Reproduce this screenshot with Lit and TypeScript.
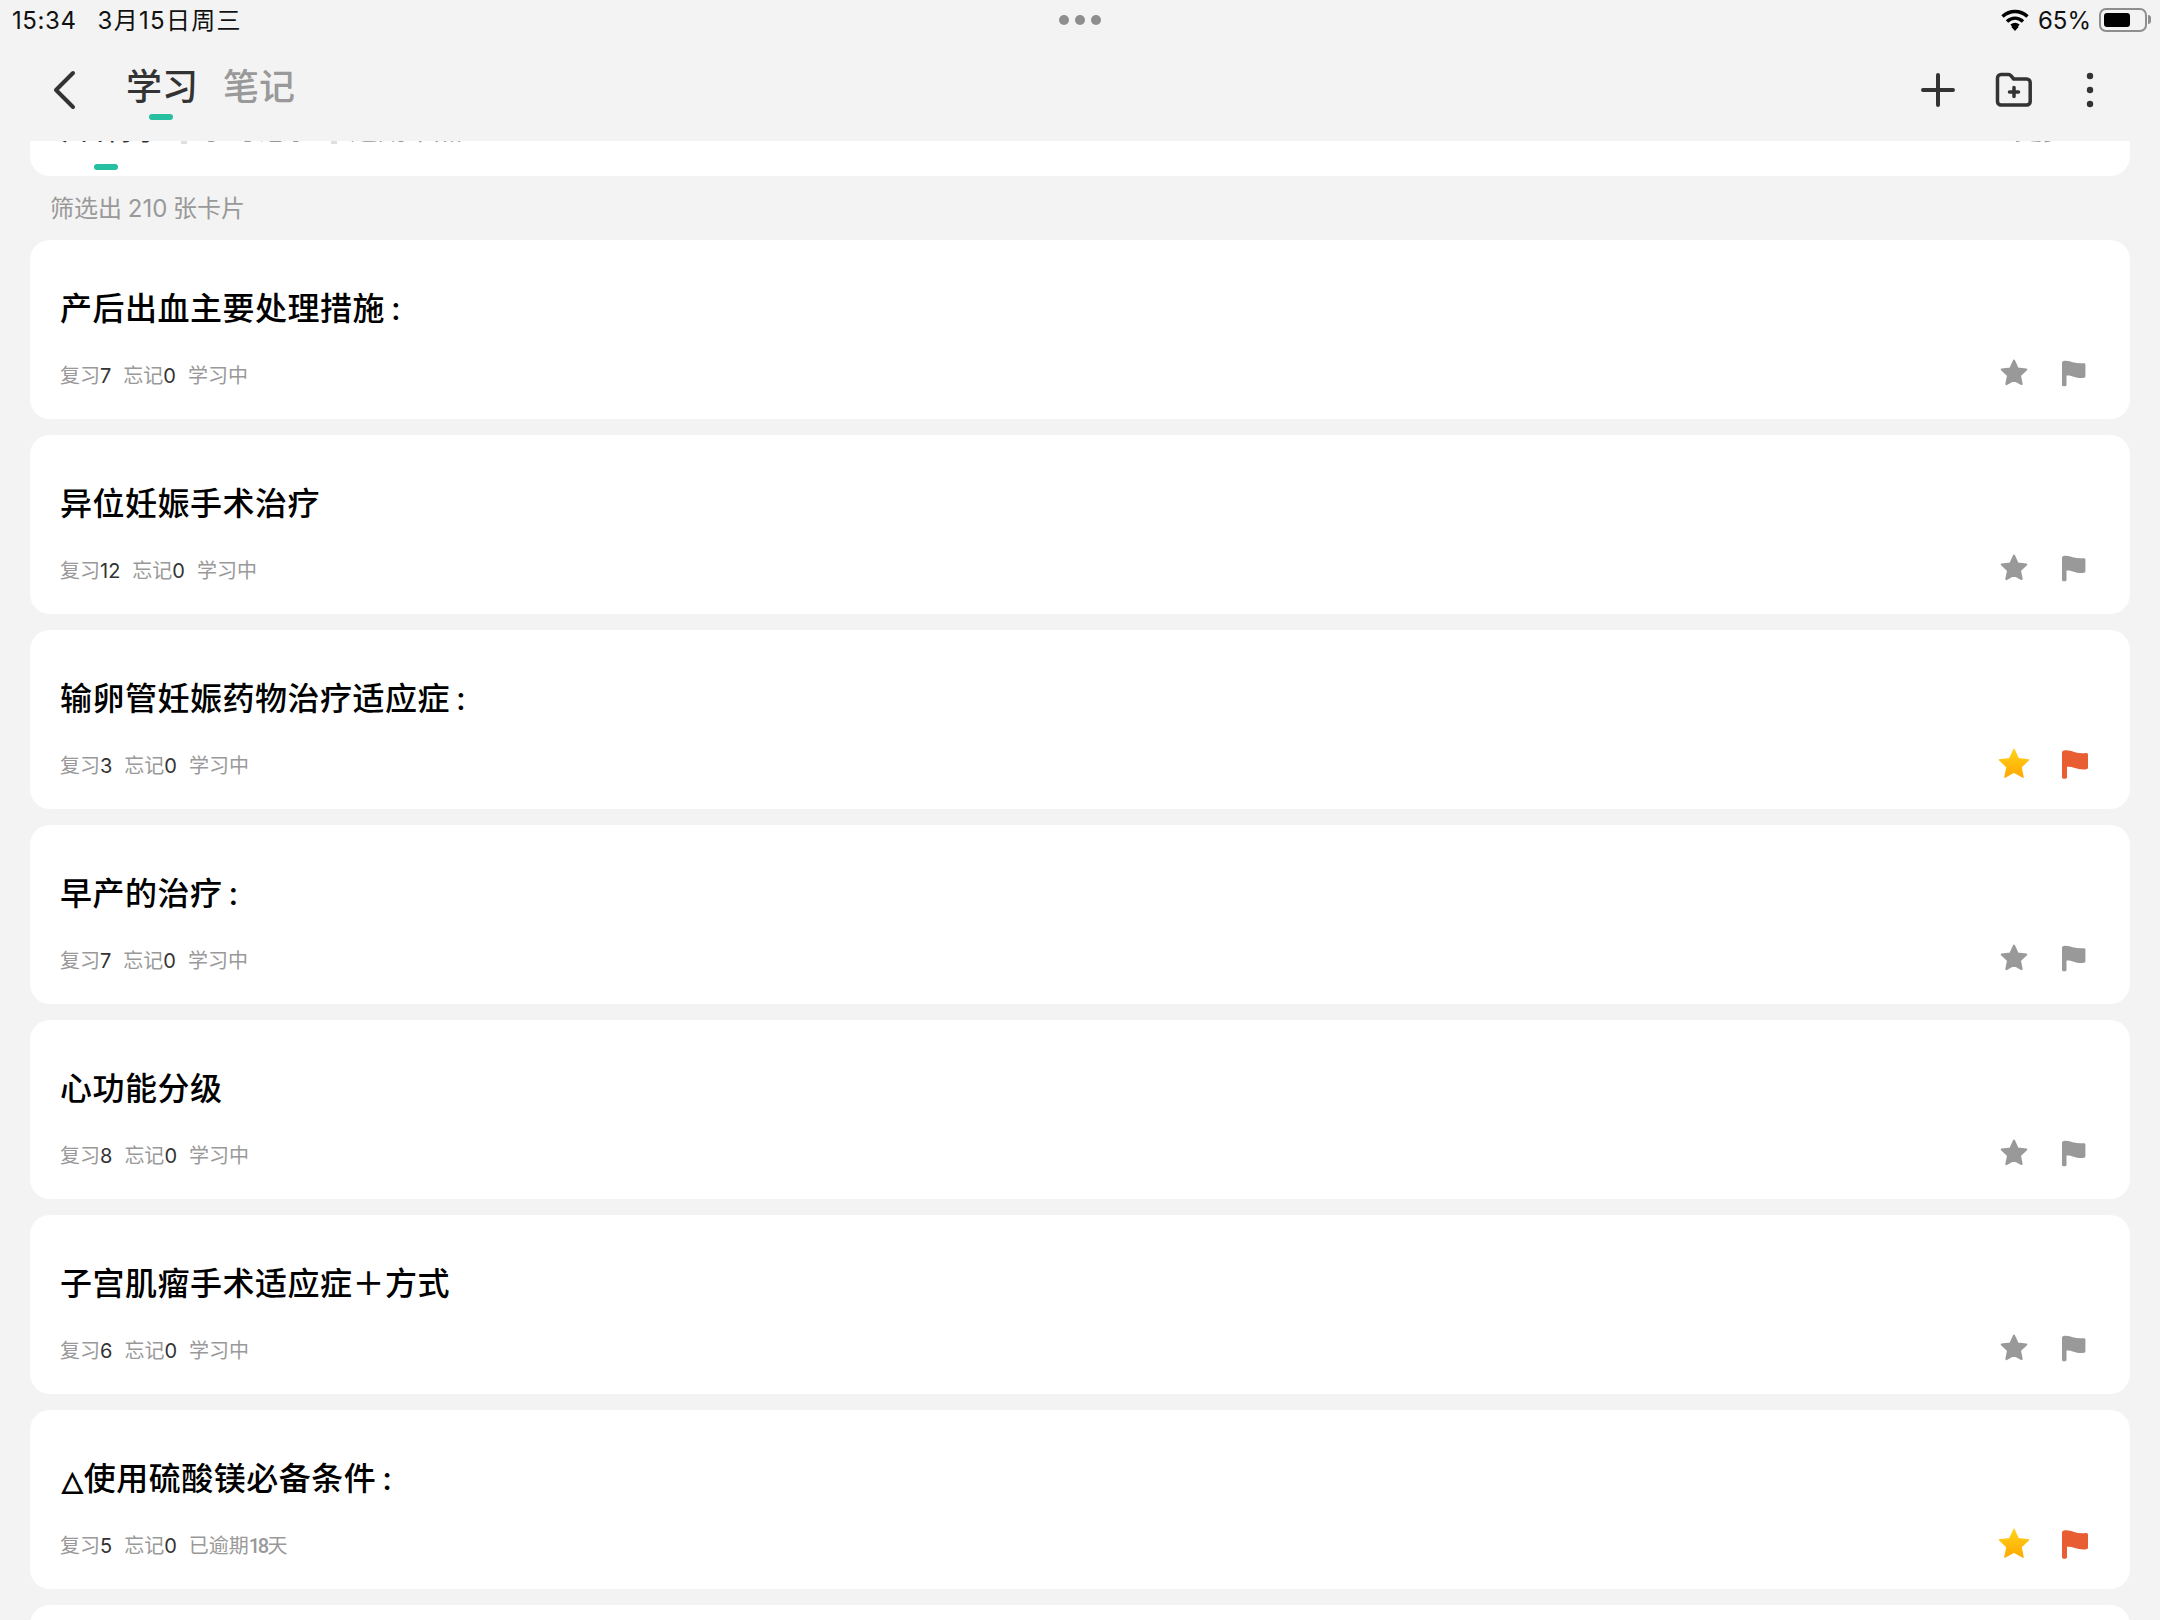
import { css, html, LitElement } from "lit";
import { customElement, property } from "lit/decorators.js";

const cards = [
	{ title: "产后出血主要处理措施\u2009:", review: 7, forgot: 0, marked: false },
	{ title: "异位妊娠手术治疗", review: 12, forgot: 0, marked: false },
	{ title: "输卵管妊娠药物治疗适应症\u2009:", review: 3, forgot: 0, marked: true },
	{ title: "早产的治疗\u2009:", review: 7, forgot: 0, marked: false },
	{ title: "心功能分级", review: 8, forgot: 0, marked: false },
	{ title: "子宫肌瘤手术适应症＋方式", review: 6, forgot: 0, marked: false },
	{ title: "使用硫酸镁必备条件\u2009:", key: true, review: 5, forgot: 0, overdue: 18, marked: true },
];

const starPath = "M14 2.5l3.4 7.4 8 .9-5.9 5.5 1.6 8-7.1-4-7.1 4 1.6-8L2.6 10.8l8-.9z";

@customElement("study-card")
export class StudyCardElement extends LitElement {
	@property({ type: String }) heading = "";
	@property({ type: Boolean }) key = false;
	@property({ type: Number }) review = 0;
	@property({ type: Number }) forgot = 0;
	@property({ type: Number }) overdue = 0;
	@property({ type: Boolean }) marked = false;

	render() {
		return html`
		<div class="card">
			<div class="title">${this.key ? html`<span class="tri">△</span>` : ""}${this.heading}</div>
			<div class="bottom">
				<div class="meta">
					<span>复习<b>${this.review}</b></span>
					<span>忘记<b>${this.forgot}</b></span>
					${this.overdue
						? html`<span>已逾期<em>${this.overdue}</em>天</span>`
						: html`<span>学习中</span>`}
				</div>
				<div class="marks ${this.marked ? "on" : ""}">
					${this.marked
						? html`<svg class="star" width="36" height="36" viewBox="0 0 28 28">
							<defs>
								<linearGradient id="gold" x1="0" y1="0" x2="0" y2="1">
									<stop offset="0" stop-color="#ffd21a"></stop>
									<stop offset="1" stop-color="#ffa800"></stop>
								</linearGradient>
							</defs>
							<path d=${starPath} fill="url(#gold)" stroke="url(#gold)" stroke-width="1" stroke-linejoin="round"></path>
						</svg>`
						: html`<svg class="star" width="36" height="30" viewBox="0 0 28 28">
							<path d=${starPath} fill="#999" stroke="#999" stroke-width="2" stroke-linejoin="round"></path>
						</svg>`}
					<svg class="flag" width="28" height=${this.marked ? 31 : 27} viewBox="0 0 28 30" preserveAspectRatio="xMinYMid meet">
						<path d="M0 3c0-1 .8-2 2-2 4-.6 7 .5 10 1.500 4 1.200 8 1.500 12 1 1-.1 2 .5 2 1.500v13c0 1-.7 1.600-1.700 1.700-4 .5-8 0-11.300-1.200-3.300-1-5.500-1.500-8-1.200v10.200c0 1-.8 1.800-2.500 1.800S0 28.500 0 27.500z" fill=${this.marked ? "#e85d31" : "#999"}></path>
					</svg>
				</div>
			</div>
		</div>
		`;
	}

	static styles = css`
	:host {
		display: block;
	}

	.card {
		box-sizing: border-box;
		height: 179px;
		padding: 47px 30px 0 30px;
		background: #fff;
		border-radius: 20px;
	}

	.title {
		height: 44px;
		font-size: 32px;
		line-height: 44px;
		font-weight: 500;
		letter-spacing: 0.5px;
		color: #000;
	}

	.tri {
		margin: 0 1px 0 2px;
		font-family: "DejaVu Sans", sans-serif;
		font-size: 27px;
		font-weight: 400;
		letter-spacing: 0;
		-webkit-text-stroke: 1px #000;
	}

	.bottom {
		display: flex;
		align-items: center;
		justify-content: space-between;
		margin-top: 22px;
		height: 40px;
	}

	.meta {
		display: flex;
		gap: 12px;
		padding-top: 2px;
		font-size: 20px;
		color: #999;
	}

	.meta b {
		font-weight: 400;
		color: #333;
	}

	.meta em {
		font-family: "Roboto", sans-serif;
		font-size: 20px;
		font-style: normal;
		font-weight: 500;
		letter-spacing: -2.500px;
		margin-right: 1px;
	}

	.marks {
		display: flex;
		align-items: center;
		height: 40px;
		margin-right: 10px;
	}

	.marks.on {
		margin-top: 2px;
	}

	.star {
		display: block;
		margin-right: 30px;
	}

	.flag {
		display: block;
	}
	`;
}

@customElement("app-root")
export class AppRootElement extends LitElement {
	render() {
		return html`
		<div class="page">
			<div class="status">
				<div class="time"><span class="clock">15:34</span><span class="date">3月15日周三</span></div>
				<div class="handle"><i></i><i></i><i></i></div>
				<div class="system">
					<svg width="30" height="22" viewBox="0 0 30 22">
						<path d="M2.500 7.500C10 .8 20 .8 27.500 7.500M7 12.500c5-4.400 11-4.400 16 0M11.500 17c2.200-1.700 4.800-1.700 7 0" fill="none" stroke="#000" stroke-width="3.600"></path>
						<path d="M15 22l-3.600-4c2-1.500 5.200-1.500 7.200 0z" fill="#000"></path>
					</svg>
					<span>65%</span>
					<div class="battery"><div class="level"></div></div>
				</div>
			</div>

			<div class="nav">
				<svg class="back" width="24" height="40" viewBox="0 0 24 40">
					<path d="M21 3L4 20l17 17" fill="none" stroke="#333" stroke-width="4" stroke-linecap="round" stroke-linejoin="round"></path>
				</svg>
				<div class="tabs">
					<div class="tab active">学习</div>
					<div class="tab">笔记</div>
				</div>
				<div class="actions">
					<svg width="34" height="34" viewBox="0 0 34 34">
						<path d="M17 2v30M2 17h30" fill="none" stroke="#333" stroke-width="4" stroke-linecap="round"></path>
					</svg>
					<svg width="38" height="36" viewBox="0 0 38 36">
						<path d="M2.500 6c0-2 1.500-3.500 3.500-3.500h7.500c1 0 1.800.4 2.400 1.200l2.800 3.300h13c2 0 3.500 1.500 3.500 3.500v19c0 2-1.500 3.500-3.500 3.500H6c-2 0-3.500-1.500-3.500-3.500z" fill="none" stroke="#333" stroke-width="3.500" stroke-linejoin="round"></path>
						<path d="M19 15.500v9M14.500 20h9" fill="none" stroke="#333" stroke-width="3.500" stroke-linecap="round"></path>
					</svg>
					<svg width="10" height="38" viewBox="0 0 10 38">
						<circle cx="5" cy="5" r="3.200" fill="#333"></circle>
						<circle cx="5" cy="19" r="3.200" fill="#333"></circle>
						<circle cx="5" cy="33" r="3.200" fill="#333"></circle>
					</svg>
				</div>
			</div>

			<div class="scroll">
				<div class="filters">
					<div class="filter-row">
						<span class="filter on">今日待学</span>
						<i class="sep"></i>
						<span class="filter">学习记录</span>
						<i class="sep"></i>
						<span class="filter">逾期难点</span>
						<span class="more">更多</span>
					</div>
				</div>
				<div class="count">筛选出 210 张卡片</div>
				<div class="list">
					${cards.map(
						(c) => html`<study-card
							.heading=${c.title}
							.key=${c.key ?? false}
							.review=${c.review}
							.forgot=${c.forgot}
							.overdue=${c.overdue ?? 0}
							.marked=${c.marked}
						></study-card>`
					)}
					<div class="next"></div>
				</div>
			</div>
		</div>
		`;
	}

	static styles = css`
	:host {
		display: block;
		font-family: "Inter", "Noto Sans CJK SC", "DejaVu Sans", sans-serif;
	}

	.page {
		display: flex;
		flex-direction: column;
		height: 1620px;
		overflow: hidden;
		background: #f3f3f3;
	}

	.status {
		display: grid;
		grid-template-columns: 1fr auto 1fr;
		align-items: center;
		height: 40px;
		padding: 0 12px;
		font-size: 24px;
		color: #111;
	}

	.time {
		display: flex;
		align-items: baseline;
		gap: 21px;
		padding-bottom: 3px;
	}

	.clock {
		letter-spacing: 0.6px;
	}

	.date {
		letter-spacing: 1.3px;
	}

	.handle {
		display: flex;
		gap: 6px;
	}

	.handle i {
		width: 10px;
		height: 10px;
		border-radius: 50%;
		background: #8e8e8e;
	}

	.system {
		display: flex;
		align-items: center;
		justify-content: flex-end;
		gap: 8px;
		margin-right: -4px;
	}

	.battery {
		position: relative;
		box-sizing: border-box;
		width: 48px;
		height: 24px;
		padding: 3px;
		border: 2px solid #8e8e8e;
		border-radius: 7px;
		margin-right: 5px;
	}

	.battery::after {
		content: "";
		position: absolute;
		right: -6px;
		top: 5px;
		width: 3px;
		height: 9px;
		border-radius: 0 3px 3px 0;
		background: #8e8e8e;
	}

	.level {
		width: 26px;
		height: 100%;
		border-radius: 3px;
		background: #000;
	}

	.nav {
		display: flex;
		align-items: center;
		height: 101px;
		padding: 0 32px 2px 52px;
		box-sizing: border-box;
	}

	.back {
		display: block;
	}

	.tabs {
		display: flex;
		gap: 25px;
		margin: 0 0 6px 50px;
	}

	.tab {
		position: relative;
		font-size: 36px;
		line-height: 48px;
		font-weight: 500;
		color: #999;
	}

	.tab.active {
		color: #333;
	}

	.tab.active::after {
		content: "";
		position: absolute;
		left: 23px;
		bottom: -9px;
		width: 24px;
		height: 6px;
		border-radius: 3px;
		background: #26bf9f;
	}

	.actions {
		display: grid;
		grid-template-columns: repeat(3, 76px);
		justify-items: center;
		align-items: center;
		margin-left: auto;
	}

	.scroll {
		flex: 1;
		min-height: 0;
		overflow: hidden;
		padding: 0 30px;
	}

	.filters {
		box-sizing: border-box;
		height: 35px;
		overflow: hidden;
		background: #fff;
		border-radius: 0 0 20px 20px;
	}

	.filter-row {
		display: flex;
		margin-top: -31px;
		padding-left: 20px;
		font-size: 28px;
		line-height: 40px;
		color: #999;
	}

	.filter {
		position: relative;
		color: #999;
	}

	.filter.on {
		color: #333;
		font-weight: 500;
	}

	.filter.on::after {
		content: "";
		position: absolute;
		left: 44px;
		top: 54px;
		width: 24px;
		height: 6px;
		border-radius: 3px;
		background: #26bf9f;
	}

	.sep {
		width: 6px;
		height: 34px;
		margin: 0 13px 0 19px;
		background: #e0e0e0;
	}

	.more {
		margin-left: auto;
		margin-right: 60px;
		color: #999;
	}

	.count {
		height: 64px;
		padding-left: 20px;
		font-size: 24px;
		line-height: 66px;
		word-spacing: -1px;
		color: #999;
	}

	.list {
		display: flex;
		flex-direction: column;
		gap: 16px;
	}

	.next {
		height: 179px;
		background: #fff;
		border-radius: 20px;
		flex: none;
	}
	`;
}
